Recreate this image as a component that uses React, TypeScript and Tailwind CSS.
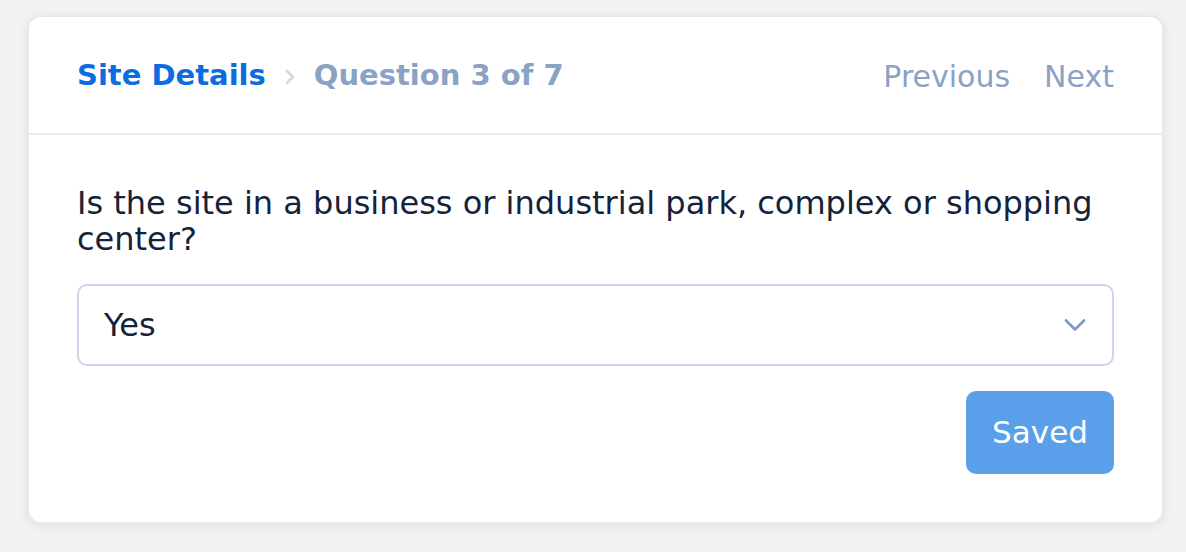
export default function App() {
  return (
    <div className="h-[552px] w-[1186px] bg-[#f2f2f3] pl-[27px] pt-[15px] font-['DejaVu_Sans',sans-serif]">
      <div className="h-[509px] w-[1137px] rounded-[14px] border-2 border-[#e4e9f2] bg-white shadow-[0_2px_10px_rgba(0,0,0,0.08)]">
        <header className="flex h-[118px] items-center justify-between border-b-2 border-[#e8edf5] px-[48px] pt-[2px]">
          <div className="flex items-center gap-[19px] text-[29px] font-bold">
            <span className="text-[#0b6de0]">Site Details</span>
            <svg width="10" height="16" viewBox="0 0 10 16" fill="none" className="mt-[2px]">
              <path d="M2 2l6 6-6 6" stroke="#cfd9e8" strokeWidth="2.6" strokeLinecap="round" strokeLinejoin="round" />
            </svg>
            <span className="text-[#8aa2c6]">Question 3 of 7</span>
          </div>
          <nav className="flex items-center gap-[34px] text-[30px] text-[#8aa2c6]">
            <span>Previous</span>
            <span>Next</span>
          </nav>
        </header>
        <section className="px-[48px] pt-[50px]">
          <p className="text-[32px] leading-[36px] text-[#14233b]">
            Is the site in a business or industrial park, complex or shopping center?
          </p>
          <div className="mt-[27px] flex h-[82px] items-center justify-between rounded-[10px] border-2 border-[#cbd7e9] pl-[25px] pr-[26px]">
            <span className="text-[32px] text-[#14233b]">Yes</span>
            <svg width="22" height="14" viewBox="0 0 22 14" fill="none">
              <path d="M2 2.5l9 9 9-9" stroke="#7f98bf" strokeWidth="2.6" strokeLinecap="round" strokeLinejoin="round" />
            </svg>
          </div>
          <div className="mt-[25px] flex justify-end">
            <button className="h-[83px] w-[148px] rounded-[10px] bg-[#5a9fea] text-[31px] text-white">
              Saved
            </button>
          </div>
        </section>
      </div>
    </div>
  );
}
